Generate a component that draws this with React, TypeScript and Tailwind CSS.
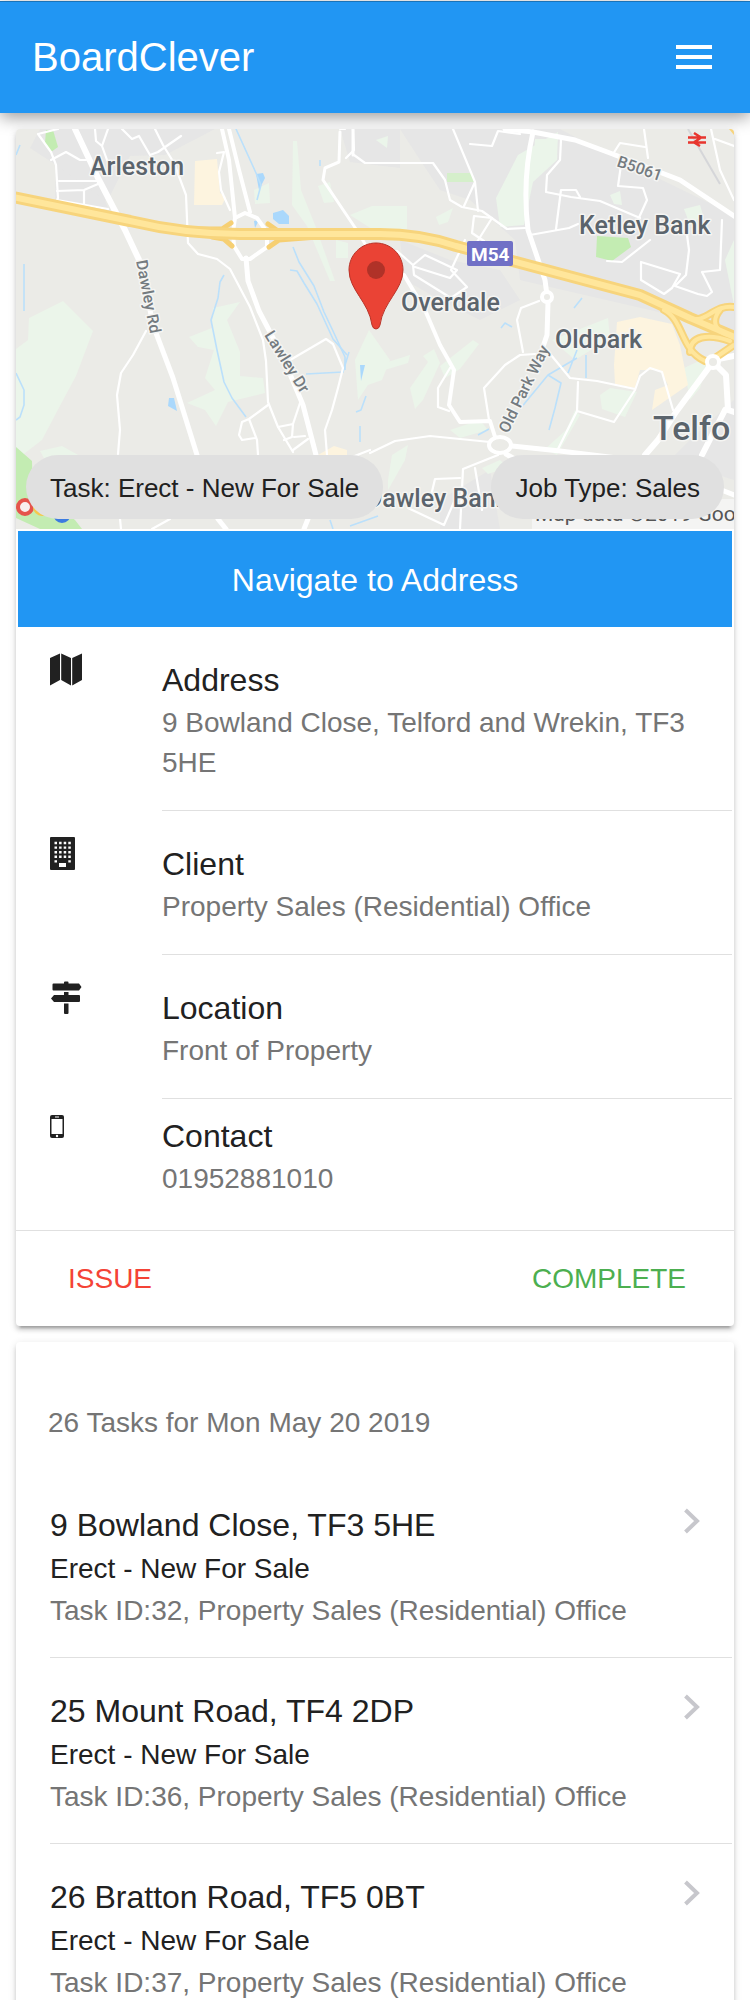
import { MdMenu } from "react-icons/md";

const MAP_FONT = 'Roboto, "Liberation Sans", sans-serif';

function MapPicture() {
  return (
    <svg viewBox="16 129 718 400" className="block w-full" preserveAspectRatio="xMidYMid slice" role="img" aria-label="Map of Overdale, Telford">
      <rect x="16" y="129" width="718" height="400" fill="#ebebe7" />
      {/* built-up areas */}
      <g fill="#e6e6e6">
        <path d="M40 129L215 129L165 155L130 156L108 200L60 206L56 165L30 148Z" />
        <path d="M56 165L105 200L110 214L55 200Z" />
        <path d="M340 129L400 129L400 168L350 162Z" />
        <path d="M400 129L560 129L600 150L734 215L734 330L650 310L520 280L515 240L470 200L440 190L420 160Z" />
        <path d="M400 240L450 260L500 270L520 300L480 320L440 300L405 280Z" />
        <path d="M690 440L734 400L734 480L670 460Z" />
        <path d="M440 500L490 470L500 529L440 529Z" />
      </g>
      {/* parkland */}
      <g fill="#ebf5ea">
        <path d="M16 349L28 340L29 318L63 301L93 331L76 376L62 402L42 440L16 460Z" />
        <path d="M40 451L62 446L80 456L70 470L45 460Z" />
        <path d="M189 337L212 328L213 308L240 302L227 320L240 352L240 376L263 378L265 393L228 402L216 426L205 410L187 403L215 390L205 378L214 350L198 347Z" />
        <path d="M293 141L297 141L301 190L315 225L335 281L330 281L307 226L292 205Z" />
        <path d="M350 215L372 206L407 206L407 229L372 229Z" />
        <path d="M336 240L348 243L348 258L336 258Z" />
        <path d="M318 186L330 182L334 202L324 203Z" />
        <path d="M254 190L269 183L270 203L255 204Z" />
        <path d="M496 198L518 155L558 132L557 160L533 182L524 225L500 227Z" />
        <path d="M535 139L558 139L550 165L533 173Z" />
        <path d="M375 366L410 355L408 363L378 372Z" />
        <path d="M410 388L428 362L423 356L434 349L440 363L423 400L415 409Z" />
        <path d="M440 366L473 340L479 344L460 369L445 378Z" />
        <path d="M552 340L608 318L610 338L575 360Z" />
        <path d="M600 395L610 388L637 392L625 417L602 409Z" />
        <path d="M684 368L710 356L700 388L690 400Z" />
        <path d="M557 455L545 449L566 430L575 410L580 415Z" />
        <path d="M388 480L392 455L408 445L405 460L388 490Z" />
        <path d="M450 430L480 420L488 430L460 438Z" />
        <path d="M482 468L500 460L508 467L488 474Z" />
        <path d="M684 209L700 205L703 215L690 225Z" />
        <path d="M725 260L734 240L734 305Z" />
        <path d="M355 360L369 330L390 360L382 380L368 385L358 400Z" />
        <path d="M610 195L620 191L622 205L614 204Z" />
        <path d="M436 217L453 208L448 222L439 225Z" />
        <path d="M376 140L388 136L387 148Z" />
      </g>
      <g fill="#c3ecb2">
        <path d="M46 130L53 130L58 147L51 152L45 143Z" />
        <path d="M16 447L32 461L33 500L55 505L75 520L82 529L40 529L16 518Z" />
        <path d="M597 236L628 238L631 247L612 261L596 257Z" />
        <path d="M447 173L472 173L474 182L447 182Z" fill="#d5efcb" />
      </g>
      <g fill="#fdf4df">
        <path d="M195 161L217 159L220 193L226 197L222 205L194 205Z" />
        <path d="M617 322L640 317L672 324L680 345L688 385L652 410L655 390L668 385L660 370L640 370L635 388L615 384L614 365Z" />
        <path d="M318 455L334 446L347 450L347 456Z" />
      </g>
      {/* water */}
      <g fill="#aad8fc">
        <path d="M273 213L283 210L289 216L289 224L279 224L273 219Z" />
        <path d="M256 174L263 173L265 178L259 190Z" />
        <path d="M169 398L174 398L177 411L168 406Z" />
        <path d="M360 365L365 365L361 381Z" />
        <path d="M254 221L259 220L255 228Z" />
      </g>
      <g fill="none" stroke="#bbe0fb" strokeWidth="1.6" strokeLinejoin="round">
        <path d="M236 129L256 173L261 185L257 200" />
        <path d="M293 247L299 262L314 286L324 312L333 331L345 357L345 370" />
        <path d="M290 270L297 271L304 283L317 304L333 339L347 355" />
        <path d="M224 275L220 282L218 298L211 320L217 350L224 382L232 398L246 417" />
        <path d="M16 373L24 390L24 405L20 417L16 420" />
        <path d="M24 264L24 311M20 145L16 155M320 160L320 166" />
        <path d="M306 374L343 372L349 352" />
        <path d="M366 396L361 410L356 412M360 426L360 442" />
        <path d="M582 298L574 308M501 328L505 323L512 327" />
        <path d="M577 350L568 373M586 355L586 378M548 375L561 383L555 408L549 430M520 409L548 375L577 358" />
        <path d="M478 435L489 429M330 520L333 529M350 526L378 516" />
      </g>
      {/* local streets */}
      <g fill="none" stroke="#ffffff" strokeWidth="2.2" strokeLinejoin="round" strokeLinecap="round">
        <path d="M58 129L38 134L51 152L56 165L58 198L57 200L108 209M51 160L66 152L80 160L86 160" />
        <path d="M59 181L97 181M57 191L84 190L98 184M84 190L84 204" />
        <path d="M95 129L96 141L102 146L108 129M102 146L107 160" />
        <path d="M122 129L132 139L139 136L150 155L158 152L181 136M155 129L163 145L174 163L186 195L188 243L198 254L217 259L230 269L250 307L263 340L266 361L268 402L278 427L293 452" />
        <path d="M217 153L224 152L219 172L221 190L230 210" />
        <path d="M146 331L133 355L121 373L117 395L120 430L118 454M120 519L121 529" />
        <path d="M285 363L326 339L333 344L343 368L338 388L332 410L325 430L327 455" />
        <path d="M268 405L249 419L242 422L239 435L242 440L255 438M249 419L257 440L258 455" />
        <path d="M278 427L293 424L292 437L284 440M293 424L301 400L297 386M294 437L305 436M293 450L308 439" />
        <path d="M340 129L345 129M353 129L354 150L346 158M354 155L365 163L433 163L445 180L450 200L462 207L482 211L507 229L525 228" />
        <path d="M353 129L353 155M340 132L339 162L325 168L323 180L358 232L365 244" strokeWidth="3" />
        <path d="M453 129L475 182L464 206M475 182L478 211M470 144L492 146L498 131L520 134M492 218L474 216L472 233L484 241M492 218L472 250" />
        <path d="M530 235L569 228L578 224M556 229L561 190L576 190L580 197M561 140L560 160L547 175L546 192L571 197L600 201L640 218" />
        <path d="M622 158L618 186L643 188L647 200L637 222M613 154L620 143L645 147M644 129L648 158M711 129L720 170L734 200M715 139L734 146" />
        <path d="M397 251L413 265L414 275L451 298L467 287L451 270L465 240M413 265L425 255L457 270L450 278L415 267" />
        <path d="M641 262L680 274L672 288L664 294L641 280L641 262M685 220L689 250L686 275L675 286L698 294L707 296L712 292L702 272M722 220L720 270L702 272" />
        <path d="M539 301L521 308L517 320L523 352M550 353L520 355L505 365L484 388L489 420M551 355L570 378L597 381L635 389M578 382L577 411L558 449M577 411L614 422L635 390L640 376L650 368L662 372L673 410" />
        <path d="M450 368L438 388L438 407L449 411M370 453L395 441L430 436L470 440L490 442" />
        <path d="M498 455L463 469L460 529M475 468L482 510M408 508L444 525L460 488M430 500L435 479L460 478M370 450L347 459M152 529L170 519" />
        <path d="M607 261L622 262L650 240" />
      </g>
      {/* through roads */}
      <g fill="none" stroke="#ffffff" strokeLinejoin="round" strokeLinecap="round">
        <path d="M75 129L98 178L125 230L141 264" strokeWidth="6" />
        <path d="M141 264L153 325L173 378L197 455M218 519L226 529" strokeWidth="5" />
        <path d="M222 129L229 160L235 218M229 129L239 170L250 212" strokeWidth="4" />
        <path d="M235 218L245 213L257 218L267 232L267 247L250 259L242 259L234 246L233 232Z" strokeWidth="4" />
        <path d="M246 258L248 281L259 311L282 355L303 405L316 455M308 519L304 529" strokeWidth="5" />
        <path d="M404 275L425 310L440 345L454 370L449 405L460 422L490 421L496 440" strokeWidth="4" />
        <path d="M505 129L533 132Q522 180 528 230L545 280L548 303L547 335L535 370" strokeWidth="5" />
        <path d="M533 132L575 140L610 153L680 180L734 216" strokeWidth="5" />
        <circle cx="547" cy="297" r="5" strokeWidth="4" fill="#ebebe7" />
        <ellipse cx="500" cy="445" rx="11" ry="8" strokeWidth="4" fill="#ebebe7" />
        <path d="M512 446L560 451L650 462L734 495M506 454L520 462" strokeWidth="5" />
        <path d="M713 362L676 412L658 440L645 455M725 410L702 455M713 362L726 375L728 410L734 412" strokeWidth="6" />
        <path d="M713 360L734 356" strokeWidth="6" />
      </g>
      <path d="M688 129L720 184" fill="none" stroke="#d5d6d9" strokeWidth="2" />
      {/* motorway and slip roads */}
      <g fill="none" strokeLinejoin="round" strokeLinecap="round">
        <path d="M185 229L222 229L231 223M212 237L224 239L232 246M268 224L278 231L330 233M269 247L279 240L330 236" stroke="#f6cf72" strokeWidth="5" />
        <path d="M664 310C684 320 680 350 705 361M690 318C706 324 714 304 734 307M690 352C690 336 708 333 730 341M734 345L712 360M720 310C710 322 716 334 734 336" stroke="#f7d47c" strokeWidth="8" />
        <path d="M8 196L130 221Q185 234 240 234H380Q420 234 456 246L640 295L690 318L744 341" stroke="#f7d47c" strokeWidth="12" />
        <path d="M8 196L130 221Q185 234 240 234H380Q420 234 456 246L640 295L690 318L744 341" stroke="#ffe69b" strokeWidth="6" />
        <path d="M664 310C684 320 680 350 705 361M690 318C706 324 714 304 734 307M690 352C690 336 708 333 730 341M734 345L712 360M720 310C710 322 716 334 734 336" stroke="#ffe69b" strokeWidth="4" />
      </g>
      <circle cx="713" cy="362" r="6" fill="#ebebe7" stroke="#ffffff" strokeWidth="4" />
      <path d="M729 129L734 129L734 135Z" fill="#f7d47c" />
      {/* labels */}
      <rect x="467" y="241" width="46" height="25" rx="2" fill="#7070c6" />
      <g fontFamily={MAP_FONT} fontWeight="500" fill="#5b646c" stroke="#f5f5f3" strokeWidth="3" strokeLinejoin="round" paintOrder="stroke">
        <g fontSize="25">
          <text x="90" y="175">Arleston</text>
          <text x="401" y="311">Overdale</text>
          <text x="579" y="234">Ketley Bank</text>
          <text x="555" y="348">Oldpark</text>
          <text x="366" y="507">Dawley Bank</text>
        </g>
        <text x="653" y="440" fontSize="34">Telfo</text>
        <g fontSize="16" fill="#747b80">
          <text transform="translate(136 261) rotate(79)">Dawley Rd</text>
          <text transform="translate(264 335) rotate(58)">Lawley Dr</text>
          <text transform="translate(508 434) rotate(-64)">Old Park Way</text>
          <text transform="translate(616 166) rotate(19)">B5061</text>
        </g>
      </g>
      <text x="471" y="261" fontFamily={MAP_FONT} fontSize="19" fontWeight="700" fill="#ffffff">M54</text>
      <path d="M688 137.500H706M688 142.500H706M694 133L701 137.500L694 142.500L700 146" stroke="#e8352e" strokeWidth="2.500" fill="none" />
      <circle cx="25" cy="507" r="7" fill="#f8eeee" stroke="#e5534b" strokeWidth="4" />
      <circle cx="42" cy="507" r="7" fill="#fff" stroke="#f4c94d" strokeWidth="4" />
      <circle cx="62" cy="514" r="7" fill="#fff" stroke="#3c7be0" strokeWidth="4" />
      <rect x="532" y="499" width="202" height="30" fill="#f6f6f5" opacity="0.85" />
      <text x="535" y="521" fontFamily={MAP_FONT} fontSize="21" fill="#565656">Map data ©2019 Goo</text>
      {/* marker */}
      <path d="M376 243C391 243 403 255 403 270C403 290 383 302 380 325Q379 329 376 329Q373 329 372 325C369 302 349 290 349 270C349 255 361 243 376 243Z" fill="#ea4335" stroke="#b93328" strokeWidth="1" />
      <circle cx="376" cy="270" r="9" fill="#b03228" />
    </svg>
  );
}

function MapIcon() {
  return (
    <svg width="32" height="33" viewBox="0 0 32 33" fill="currentColor" aria-hidden="true">
      <path d="M0 5L10 0.500V27L0 32.500ZM11.200 0.500L21 5V32.500L11.200 27ZM22.200 5L32 0.500V27L22.200 32.500Z" />
    </svg>
  );
}

function BuildingIcon() {
  return (
    <svg width="25" height="33" viewBox="0 0 25 33" aria-hidden="true">
      <rect width="25" height="33" rx="1" fill="currentColor" />
      <path d="M4.500 6H21M4.500 10.600H21M4.500 15.200H21M4.500 19.800H21" stroke="#fff" strokeWidth="2.400" strokeDasharray="2.500 2.100" />
      <path d="M4.500 24.400H7M18.300 24.400H20.800" stroke="#fff" strokeWidth="2.400" />
      <rect x="9" y="26" width="7" height="4" fill="#fff" />
    </svg>
  );
}

function SignsIcon() {
  return (
    <svg width="32" height="33" viewBox="0 0 32 33" fill="currentColor" aria-hidden="true">
      <path d="M14 2.500V1.500Q14 0.500 15 0.500H17.500Q18.500 0.500 18.500 1.500V2.500H29L31.500 6L29 9.500H3.500Q2.500 9.500 2.500 8.500V3.500Q2.500 2.500 3.500 2.500ZM14 11H18.500V14H29Q30 14 30 15V20Q30 21 29 21H4L1 17.500L4 14H14ZM14 22.500H18.500V32Q18.500 33 17.500 33H15Q14 33 14 32Z" />
    </svg>
  );
}

function PhoneIcon() {
  return (
    <svg width="14" height="23" viewBox="0 0 14 23" aria-hidden="true">
      <rect width="14" height="23" rx="2" fill="currentColor" />
      <rect x="1.500" y="4" width="11" height="15" fill="#fff" />
      <path d="M5 2H9" stroke="#fff" strokeWidth="1" />
      <circle cx="7" cy="21" r="1.200" fill="#fff" />
    </svg>
  );
}

const details = [
  { title: "Address", text: "9 Bowland Close, Telford and Wrekin, TF3 5HE", Icon: MapIcon },
  { title: "Client", text: "Property Sales (Residential) Office", Icon: BuildingIcon },
  { title: "Location", text: "Front of Property", Icon: SignsIcon },
];

const tasks = [
  { title: "9 Bowland Close, TF3 5HE", id: 32 },
  { title: "25 Mount Road, TF4 2DP", id: 36 },
  { title: "26 Bratton Road, TF5 0BT", id: 37 },
];

const CARD = "rounded bg-white shadow-[0_4px_4px_rgba(0,0,0,0.14),0_6px_2px_-4px_rgba(0,0,0,0.2),0_2px_8px_rgba(0,0,0,0.12)]";

export default function App() {
  return (
    <div className="h-screen overflow-hidden bg-white font-['Liberation_Sans',Arial,sans-serif] text-[#212121]">
      <header className="relative mt-px flex h-28 items-center justify-between border-t border-[#1a73b8] bg-[#2196f3] px-8 pb-0.5 text-white shadow-[0_4px_16px_rgba(0,0,0,0.4)]">
        <h1 className="text-[40px] leading-none">BoardClever</h1>
        <button type="button" aria-label="Menu">
          <MdMenu size={48} />
        </button>
      </header>

      <main className="flex flex-col gap-4 p-4">
        <section className={CARD}>
          <div className="relative overflow-hidden rounded-t">
            <MapPicture />
            <div className="absolute inset-x-2.5 bottom-2.5 flex justify-between text-[26px] leading-[62px]">
              <span className="rounded-full bg-[#e0e0e0] px-6 pt-0.5">Task: Erect - New For Sale</span>
              <span className="rounded-full bg-[#e0e0e0] px-6 pt-0.5">Job Type: Sales</span>
            </div>
          </div>
          <div className="px-0.5 pt-0.5">
            <button type="button" className="block h-24 w-full bg-[#2196f3] pt-0.5 text-[32px] text-white">
              Navigate to Address
            </button>
          </div>
          <ul>
            {details.map(({ title, text, Icon }) => (
              <li key={title} className="flex pr-0.5 pl-[34px]">
                <div className="w-28 shrink-0 pt-[26px]">
                  <Icon />
                </div>
                <div className="grow border-b border-[#e0e0e0] pt-[30px] pr-8 pb-[27px]">
                  <h2 className="text-[32px] leading-[46px]">{title}</h2>
                  <p className="text-[28px] leading-[40px] text-[#757575]">{text}</p>
                </div>
              </li>
            ))}
            <li className="flex pr-0.5 pl-[34px]">
              <div className="w-28 shrink-0 pt-4">
                <PhoneIcon />
              </div>
              <div className="grow pt-3.5 pb-[31px]">
                <h2 className="text-[32px] leading-[46px]">Contact</h2>
                <p className="text-[28px] leading-[40px] text-[#757575]">01952881010</p>
              </div>
            </li>
          </ul>
          <div className="flex items-center justify-between border-t border-[#e0e0e0] px-8 py-3 text-[28px]">
            <button type="button" className="h-[71px] px-5 text-[#f44336]">ISSUE</button>
            <button type="button" className="h-[71px] px-4 text-[#4caf50]">COMPLETE</button>
          </div>
        </section>

        <section className={CARD}>
          <h2 className="px-8 pt-16 pb-8 text-[28px] leading-[34px] text-[#757575]">26 Tasks for Mon May 20 2019</h2>
          <ul>
            {tasks.map(({ title, id }) => (
              <li key={id} className="pr-0.5 pl-[34px]">
                <a href={`#task-${id}`} className="flex items-start justify-between border-b border-[#e0e0e0] pt-[30px] pr-8 pb-[25px]">
                  <div>
                    <h3 className="text-[32px] leading-[46px]">{title}</h3>
                    <p className="text-[28px] leading-[42px]">Erect - New For Sale</p>
                    <p className="text-[28px] leading-[42px] text-[#757575]">Task ID:{id}, Property Sales (Residential) Office</p>
                  </div>
                  <svg width="16" height="26" viewBox="0 0 16 26" className="mt-1.5 shrink-0" aria-hidden="true">
                    <path d="M1.500 2L13 13L1.500 24" fill="none" stroke="#c7c7cc" strokeWidth="4" />
                  </svg>
                </a>
              </li>
            ))}
          </ul>
        </section>
      </main>
    </div>
  );
}
